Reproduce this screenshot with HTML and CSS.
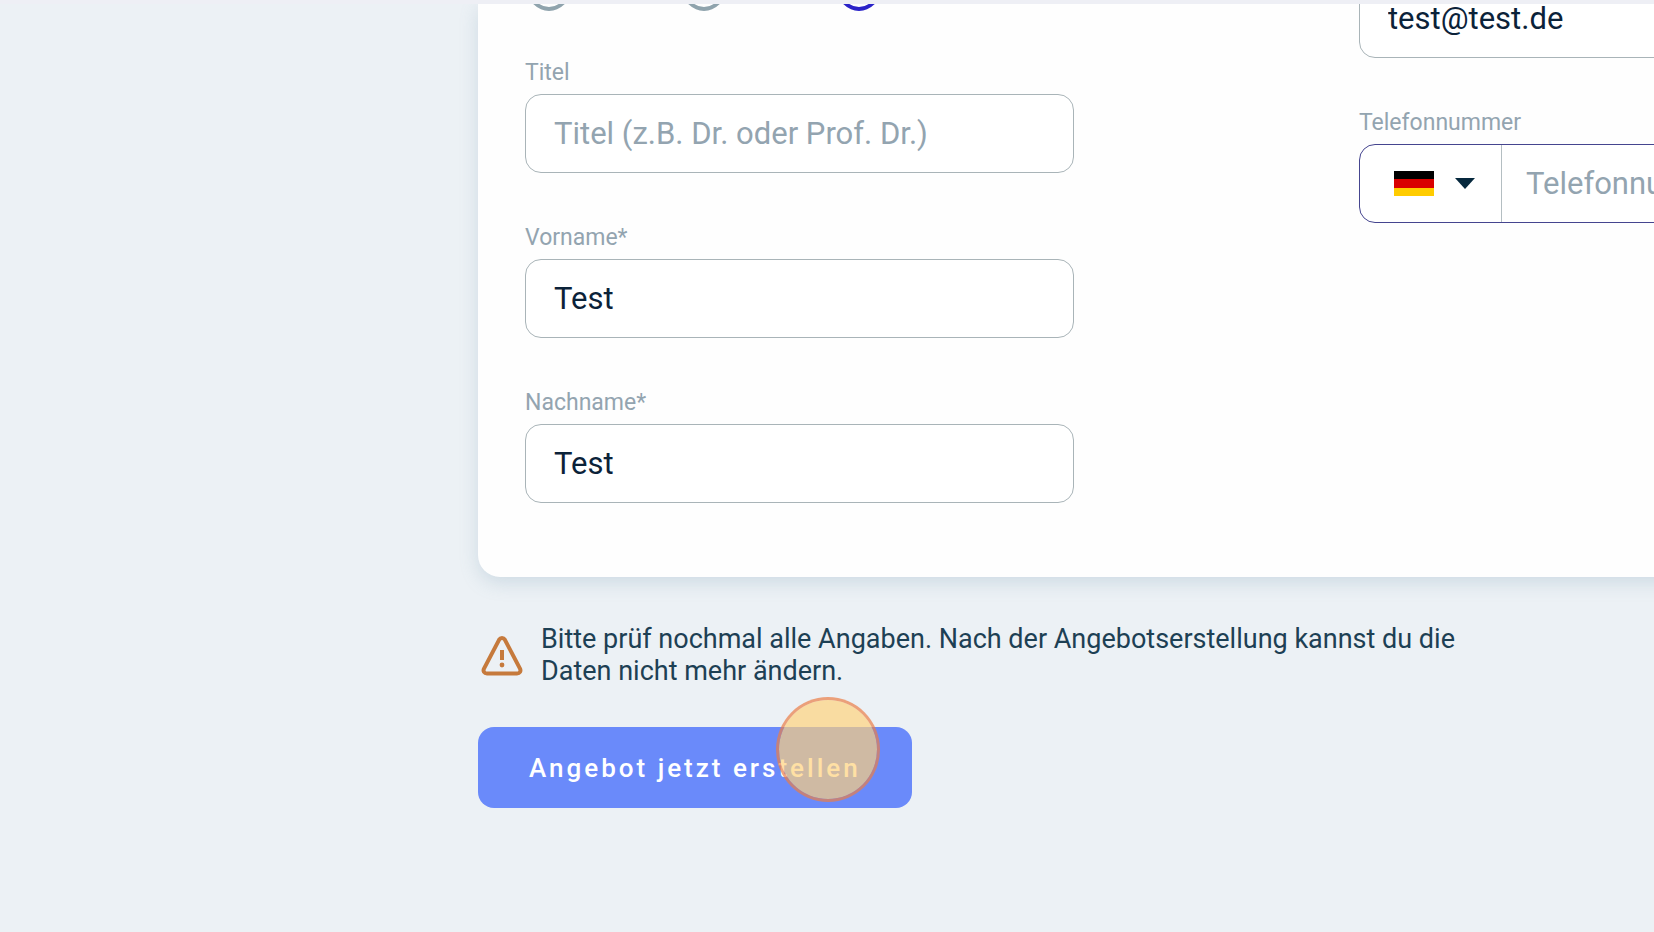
FILE: index.html
```
<!DOCTYPE html>
<html lang="de">

<head>
    <meta charset="UTF-8">
    <meta name="viewport" content="width=device-width, initial-scale=1.0">
    <title>Angebot erstellen</title>
    <link rel="stylesheet" href="styles.css">
</head>

<body>
    <header class="topbar"></header>
    <main class="page">
        <form class="offer" action="#">
            <div class="card">
                <div class="columns">
                    <div class="column">
                        <div class="radios" role="radiogroup" aria-label="Anrede">
                            <input class="radio" type="radio" name="anrede" value="frau" aria-label="Frau">
                            <input class="radio" type="radio" name="anrede" value="herr" aria-label="Herr">
                            <input class="radio" type="radio" name="anrede" value="divers" aria-label="Divers" checked>
                        </div>
                        <div class="field">
                            <label for="titel">Titel</label>
                            <input class="textbox" type="text" id="titel" placeholder="Titel (z.B. Dr. oder Prof. Dr.)">
                        </div>
                        <div class="field">
                            <label for="vorname">Vorname*</label>
                            <input class="textbox" type="text" id="vorname" value="Test">
                        </div>
                        <div class="field">
                            <label for="nachname">Nachname*</label>
                            <input class="textbox" type="text" id="nachname" value="Test">
                        </div>
                    </div>

                    <div class="column contact">
                        <div class="field">
                            <input class="textbox" type="email" id="email" value="test@test.de" aria-label="E-Mail">
                        </div>
                        <div class="field">
                            <label for="telefon">Telefonnummer</label>
                            <div class="phone">
                                <button class="country" type="button" aria-label="Deutschland">
                                    <svg width="40" height="25" viewBox="0 0 40 25">
                                        <rect width="40" height="9" fill="#000" />
                                        <rect y="8" width="40" height="9" fill="#d90000" />
                                        <rect y="17" width="40" height="8" fill="#ffcc00" />
                                    </svg>
                                    <svg width="20" height="11" viewBox="0 0 20 11">
                                        <path d="M0 0h20L10 11z" fill="#06283d" />
                                    </svg>
                                </button>
                                <input class="number" type="tel" id="telefon" placeholder="Telefonnummer">
                            </div>
                        </div>
                    </div>
                </div>
            </div>

            <div class="notice">
                <svg class="warning" width="42" height="42" viewBox="0 0 42 42" fill="none" stroke="#c67a3c" stroke-linejoin="round">
                    <path d="M18.2 5.6 3 34.6c-1.2 2.5.2 4.9 3 4.9h30c2.8 0 4.2-2.4 3-4.9L23.8 5.6c-1.3-2.3-4.3-2.3-5.6 0z" stroke-width="4" />
                    <path d="M21 16v10" stroke-width="4" />
                    <circle cx="21" cy="31" r="2.4" fill="#c67a3c" stroke="none" />
                </svg>
                <p>Bitte prüf nochmal alle Angaben. Nach der Angebotserstellung kannst du die Daten nicht mehr ändern.</p>
            </div>

            <div class="actions">
                <button class="submit" type="submit">Angebot jetzt erstellen</button>
                <span class="click-marker"></span>
            </div>
        </form>
    </main>
</body>

</html>
```
FILE: styles.css
```
* {
    box-sizing: border-box;
}

body {
    margin: 0;
    height: 100vh;
    display: flex;
    flex-direction: column;
    overflow: hidden;
    background-color: #ecf1f5;
    font-family: Roboto, "Liberation Sans", sans-serif;
    color: #0b2239;
}

.topbar {
    flex: none;
    height: 4px;
    background-color: #eeeff5;
}

.page {
    flex: 1;
    min-height: 0;
    overflow: hidden;
    padding-left: 28.9vw;
}

/* the card is wider than the window and runs off to the right */
.card {
    width: 89.3vw;
    padding: 0 47px 74px;
    background-color: #fefefe;
    border-radius: 0 0 22px 22px;
    box-shadow: 0 6px 18px rgba(120, 155, 180, 0.25);
}

.columns {
    display: flex;
    justify-content: space-between;
    align-items: flex-start;
}

/* scrolled up under the top bar */
.column {
    width: 39.7%;
    margin-top: -61px;
    display: flex;
    flex-direction: column;
}

.contact {
    margin-top: -25px;
}

.radios {
    display: flex;
    align-items: flex-end;
    gap: 113px;
    height: 68px;
    padding-left: 3px;
    margin-bottom: 47px;
}

.radio {
    appearance: none;
    flex: none;
    width: 42px;
    height: 42px;
    margin: 0;
    border: 4px solid #8fa3ad;
    border-radius: 50%;
}

.radio:checked {
    border-color: #2a22c8;
}

.field {
    display: flex;
    flex-direction: column;
    gap: 6px;
}

.field + .field {
    margin-top: 50px;
}

label {
    font-size: 23px;
    line-height: 30px;
    color: #93a4b0;
}

.textbox,
.number {
    font-family: inherit;
    font-size: 31px;
    color: inherit;
    outline: none;
}

.textbox {
    width: 100%;
    height: 79px;
    padding: 0 28px;
    border: 1px solid #a9b4b8;
    border-radius: 16px;
    background-color: #fff;
}

::placeholder {
    color: #93a4b0;
    opacity: 1;
}

.phone {
    display: flex;
    height: 79px;
    border: 1px solid #45458f;
    border-radius: 16px;
    background-color: #fff;
}

.country {
    display: flex;
    align-items: center;
    gap: 21px;
    padding: 0 26px 0 34px;
    border: none;
    border-right: 1px solid #b4bec2;
    background: none;
}

.number {
    flex: 1;
    min-width: 0;
    padding: 0 24px;
    border: none;
    background: none;
}

.notice {
    display: flex;
    align-items: center;
    gap: 18px;
    margin: 46px 0 40px;
    padding-left: 3px;
}

.warning {
    flex: none;
}

.notice p {
    max-width: 960px;
    margin: 0;
    font-size: 27px;
    line-height: 32px;
    color: #1d4054;
}

.actions {
    position: relative;
    display: flex;
}

.submit {
    height: 81px;
    padding: 0 51px;
    border: none;
    border-radius: 16px;
    background-color: #6a8afa;
    color: #fff;
    font-family: inherit;
    font-size: 26px;
    font-weight: 500;
    letter-spacing: 3px;
}

.click-marker {
    position: absolute;
    left: 298px;
    top: -30px;
    width: 104px;
    height: 105px;
    border: 3px solid rgba(235, 125, 70, 0.7);
    border-radius: 50%;
    background-color: rgba(255, 209, 121, 0.68);
    background-clip: padding-box;
    pointer-events: none;
}
```
